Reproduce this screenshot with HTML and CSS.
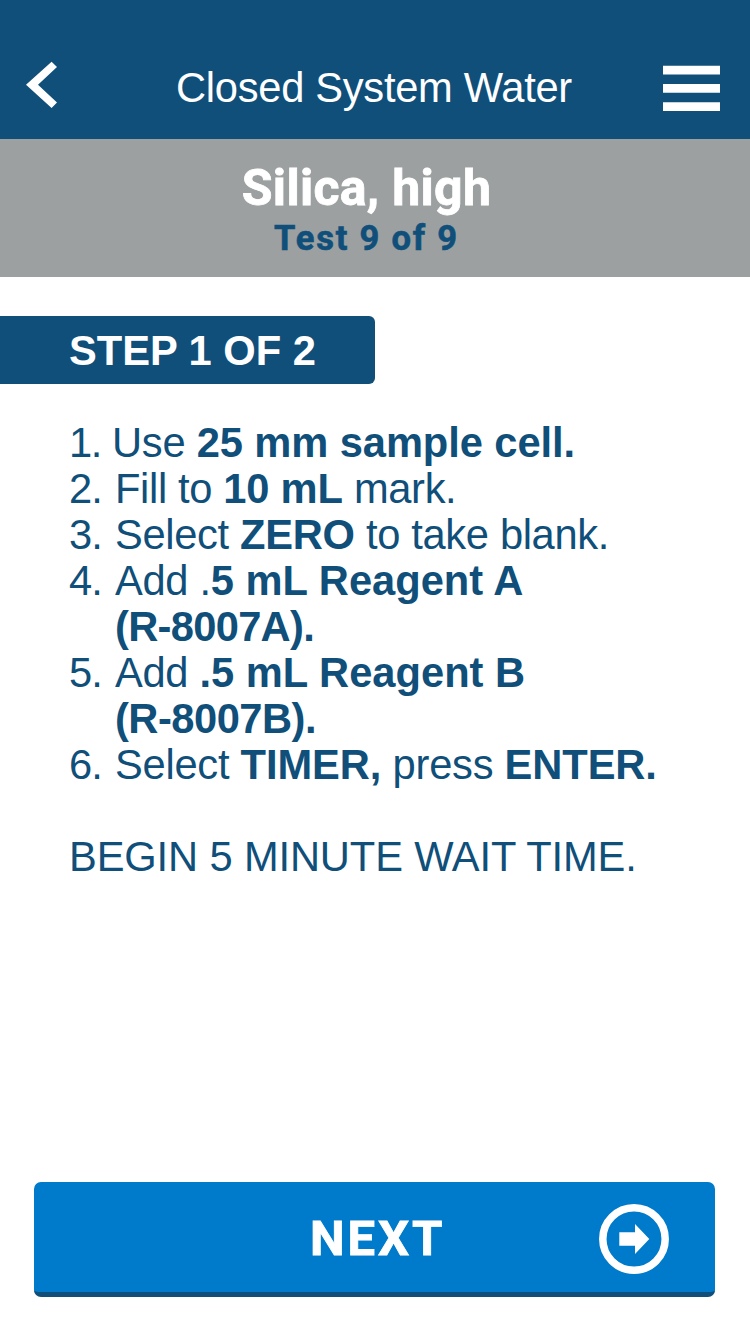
FILE: index.html
```html
<!DOCTYPE html>
<html lang="en">
<head>
<meta charset="utf-8">
<title>Closed System Water</title>
<link rel="stylesheet" href="styles.css">
</head>
<body>
<div class="screen">
  <header class="topbar">
    <svg class="back" width="31" height="48" viewBox="0 0 31 48"><path d="M25.600 .8 L31 6 L12 23.700 L31 41.600 L25.600 47 L0 23.800 Z" fill="#fff"/></svg>
    <h1 class="title">Closed System Water</h1>
    <svg class="menu" width="57" height="48" viewBox="0 0 57 48"><path d="M0 .7h57v8.700H0zM0 19h57v8.700H0zM0 37.300h57v8.700H0z" fill="#fff"/></svg>
  </header>
  <section class="test">
    <h2 class="test-name">Silica, high</h2>
    <p class="test-count">Test 9 of 9</p>
  </section>
  <main class="content">
    <div class="step"><span class="line">STEP 1 OF 2</span></div>
    <ol class="list">
      <li class="item first"><span class="line num">1.</span><span class="line">Use <b>25 mm sample cell.</b></span></li>
      <li class="item"><span class="line num">2.</span><span class="line tight">Fill to <b>10 mL</b> mark.</span></li>
      <li class="item"><span class="line num">3.</span><span class="line tight">Select <b>ZERO</b> to take blank.</span></li>
      <li class="item"><span class="line num">4.</span><div><span class="line loose">Add .<b>5 mL Reagent A</b></span><b class="line code">(R-8007A).</b></div></li>
      <li class="item"><span class="line num">5.</span><div><span class="line loose">Add <b>.5 mL Reagent B</b></span><b class="line code-b">(R-8007B).</b></div></li>
      <li class="item"><span class="line num">6.</span><span class="line">Select <b>TIMER,</b> press <b>ENTER.</b></span></li>
    </ol>
    <p class="wait line">BEGIN 5 MINUTE WAIT TIME.</p>
  </main>
  <button class="next" type="button">
    <span class="next-label">NEXT</span>
    <svg class="next-icon" width="70" height="70" viewBox="0 0 70 70"><circle cx="35" cy="35" r="31.200" fill="none" stroke="#fff" stroke-width="7.500"/><path d="M20.300 28.200H36V20L50.300 35L36 50V41.800H20.300Z" fill="#fff"/></svg>
  </button>
</div>
</body>
</html>
```
FILE: styles.css
```css
* { box-sizing: border-box; margin: 0; padding: 0; }
body {
  background: #fff;
  color: #0f4f7a;
  font-family: "Liberation Sans", Arial, sans-serif;
}
.screen { display: flex; flex-direction: column; width: 750px; height: 1334px; }
.topbar {
  display: flex;
  align-items: flex-start;
  justify-content: space-between;
  height: 139px;
  padding: 61px 30px 0 26px;
  background: #0f4f7a;
}
.menu { margin-top: 4px; }
.title {
  margin: 4px 0 0 28px;
  color: #fff;
  font-size: 41.67px;
  font-weight: 400;
  line-height: 46px;
  letter-spacing: -.28px;
  white-space: nowrap;
  transform: scaleY(1.04);
  transform-origin: 0 37px;
}
.test {
  height: 138px;
  padding: 21px 17px 0 0;
  background: #9da0a0;
  text-align: center;
  font-family: Roboto, sans-serif;
}
.test-name {
  color: #fff;
  font-size: 50px;
  font-weight: 700;
  line-height: 56px;
  letter-spacing: .3px;
  -webkit-text-stroke: .8px #fff;
}
.test-count {
  font-size: 34.5px;
  font-weight: 700;
  line-height: 44px;
  letter-spacing: 1.8px;
  -webkit-text-stroke: .6px #0f4f7a;
}
.content { flex: 1; padding-top: 39px; }
/* One text line, slightly taller than the face's natural proportions. */
.line {
  display: block;
  font-size: 41.67px;
  line-height: 46px;
  letter-spacing: -.25px;
  white-space: nowrap;
  transform: scaleY(1.04);
  transform-origin: 0 37px;
}
.line b { letter-spacing: -.08px; }
.step {
  width: 375px;
  height: 68px;
  padding: 12px 0 0 69px;
  border-radius: 0 6px 6px 0;
  background: #0f4f7a;
  color: #fff;
  font-weight: 700;
}
.step .line { letter-spacing: 0; }
.list { margin-top: 36px; padding-left: 69px; list-style: none; }
.item { display: flex; }
.num { flex: none; width: 46px; letter-spacing: -1px; }
.first .num { width: 43px; letter-spacing: -1.500px; }
.tight { letter-spacing: -.35px; }
.tight b { letter-spacing: -.2px; }
.loose { letter-spacing: -.3px; }
.loose b { letter-spacing: 0; }
.code { letter-spacing: -.7px; }
.code-b { letter-spacing: -.5px; }
.wait { margin: 46px 0 0 69px; letter-spacing: -.13px; }
.next {
  display: flex;
  align-items: center;
  justify-content: flex-end;
  width: 681px;
  height: 115px;
  margin: 0 0 37px 34px;
  padding: 4px 46px 0 0;
  border: 0;
  border-bottom: 5px solid #0f4f7a;
  border-radius: 7px;
  background: #007acb;
  color: #fff;
}
.next-label {
  width: 132px;
  margin-right: 157px;
  font: 700 49px/56px Roboto, sans-serif;
  letter-spacing: 2.9px;
  white-space: nowrap;
  -webkit-text-stroke: .8px #fff;
}
```
